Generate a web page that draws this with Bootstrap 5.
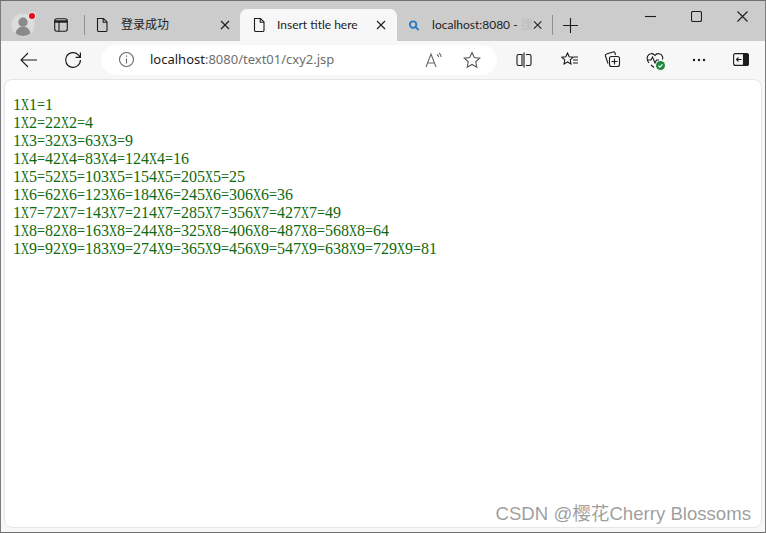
<!DOCTYPE html>
<html lang="zh-CN">
<head>
  <meta charset="UTF-8" />
  <meta name="viewport" content="width=device-width, initial-scale=1.0" />
  <title>Insert title here</title>
  <link href="https://cdn.jsdelivr.net/npm/bootstrap@5.3.0/dist/css/bootstrap.min.css" rel="stylesheet">
  <style>
    html, body { height: 100%; }
    body {
      margin: 0;
      overflow: hidden;
      background: #f7f7f7;
      font-family: "Noto Sans", "Noto Sans CJK SC", sans-serif;
      color: #222;
    }
    svg { display: block; fill: none; stroke: #1c1c1c; stroke-width: 1.1; }
    .win-frame {
      height: 533px;
      border-top: 1px solid #6e6e6e;
      border-left: 1px solid #7d7d7d;
      border-right: 1px solid #7d7d7d;
      border-bottom: 1px solid #6e6e6e;
      display: flex;
      flex-direction: column;
      position: relative;
    }
    .tab-strip { height: 40px; background: #cccccc; flex: none; padding-top: 8px; }
    .avatar-wrap { width: 24px; margin-left: 10px; position: relative; }
    .red-dot {
      position: absolute; top: 0; left: 18px; width: 6px; height: 6px;
      border-radius: 50%; background: #e00b1c; box-shadow: 0 0 0 1px #e6e6e6;
    }
    .strip-sep { width: 1px; height: 20px; background: #8f8f8f; flex: none; }
    .tab-item {
      height: 32px; font-size: 12px; white-space: nowrap; flex: none;
      font-family: "Lato", "Noto Sans CJK SC", sans-serif;
    }
    .tab-first { width: 155px; padding: 0 10px 0 9px; }
    .tab-active {
      width: 157px; background: #f7f7f7;
      border-radius: 7px 7px 0 0; padding: 0 11px;
    }
    .tab-third { width: 155px; padding: 0 10px 0 11px; }
    .tab-label { flex: 1; overflow: visible; }
    .tab-fade { color: #bdbdbd; }
    .win-btn { width: 46px; display: flex; justify-content: center; }
    .tool-strip { height: 37px; background: #f7f7f7; flex: none; }
    .addr-box {
      width: 396px; height: 30px; background: #fff; border-radius: 15px;
      font-size: 13px; margin-left: 19px;
    }
    .addr-host { color: #1c1c1c; }
    .addr-rest { color: #6f6f6f; }
    .page-pane {
      flex: 1; background: #fff; margin: 1px 3px 4px 3px;
      border-radius: 8px; border: 1px solid #e6e6e6; padding: 16px 8px 0;
    }
    .calc-text {
      font-family: "Liberation Serif", serif;
      font-size: 16px; line-height: 18px; color: #0f6a0f; white-space: nowrap;
    }
    /* X and = are wider than the digits in this font, squeeze them into the 8px cell */
    .cell-x, .cell-eq { display: inline-block; width: 8px; transform-origin: left center; }
    .cell-x { transform: scaleX(.69); }
    .cell-eq { transform: scaleX(.88); }
    .csdn-mark {
      position: absolute; right: 14px; bottom: 6px;
      font-family: "Liberation Sans", "Noto Sans CJK SC", sans-serif;
      font-size: 18.6px; line-height: 24px; color: rgba(120,120,120,.72);
    }
  </style>
</head>
<body>
  <div class="win-frame">
    <div class="tab-strip d-flex align-items-center">
      <div class="avatar-wrap">
        <svg width="24" height="24" viewBox="0 0 26 26" style="stroke:none">
          <circle cx="13" cy="13" r="12.5" fill="#dcdcdc"/>
          <circle cx="13" cy="10" r="5" fill="#8a8a8a"/>
          <path d="M5 22c1-5 4-7 8-7s7 2 8 7c-2 2-5 3-8 3s-6-1-8-3z" fill="#8a8a8a"/>
        </svg>
        <span class="red-dot"></span>
      </div>
      <svg style="margin-left:18px" width="16" height="16" viewBox="0 0 16 16" stroke-width="1.4">
        <rect x="1.700" y="1.700" width="12.600" height="12.600" rx="2.200"/>
        <path d="M1.700 4.500h12.600" stroke-width="2.400"/><path d="M6 5v9.300"/>
      </svg>
      <span class="strip-sep" style="margin-left:15px"></span>
      <div class="tab-item tab-first d-flex align-items-center">
        <svg width="16" height="16" viewBox="0 0 16 16">
          <path d="M3.500 1.500h6l3.500 3.500v8.200a1.300 1.300 0 0 1-1.300 1.300H4.800a1.300 1.300 0 0 1-1.300-1.300z"/><path d="M9.200 1.500v3.800H13"/>
        </svg>
        <span class="tab-label" style="margin-left:11px">登录成功</span>
        <svg width="10" height="10" viewBox="0 0 10 10"><path d="M1 1l8 8M9 1l-8 8"/></svg>
      </div>
      <div class="tab-item tab-active d-flex align-items-center">
        <svg width="16" height="16" viewBox="0 0 16 16">
          <path d="M3.500 1.500h6l3.500 3.500v8.200a1.300 1.300 0 0 1-1.300 1.300H4.800a1.300 1.300 0 0 1-1.300-1.300z"/><path d="M9.200 1.500v3.800H13"/>
        </svg>
        <span class="tab-label" style="margin-left:10px">Insert title here</span>
        <svg width="10" height="10" viewBox="0 0 10 10"><path d="M1 1l8 8M9 1l-8 8"/></svg>
      </div>
      <div class="tab-item tab-third d-flex align-items-center">
        <svg width="13" height="13" viewBox="0 0 13 13" style="stroke:#2a78c2;stroke-width:2">
          <circle cx="5.500" cy="5.500" r="3.500"/><path d="M8 8l3.500 3.500"/>
        </svg>
        <span class="tab-label" style="margin-left:12px">localhost:8080 - <span class="tab-fade">搜</span></span>
        <svg width="10" height="10" viewBox="0 0 10 10"><path d="M1 1l8 8M9 1l-8 8"/></svg>
      </div>
      <span class="strip-sep"></span>
      <svg style="margin-left:10px" width="15" height="15" viewBox="0 0 15 15"><path d="M7.500 0v15M0 7.500h15"/></svg>
      <div class="ms-auto d-flex align-self-start" style="margin-top:2px">
        <div class="win-btn"><svg width="11" height="11" viewBox="0 0 11 11"><path d="M0 5.500h11"/></svg></div>
        <div class="win-btn"><svg width="11" height="11" viewBox="0 0 11 11"><rect x=".5" y=".5" width="10" height="10" rx="1.500"/></svg></div>
        <div class="win-btn"><svg width="11" height="11" viewBox="0 0 11 11"><path d="M.5.5l10 10M10.500.5l-10 10"/></svg></div>
      </div>
    </div>

    <div class="tool-strip d-flex align-items-center">
      <svg style="margin-left:19px" width="17" height="16" viewBox="0 0 17 16"><path d="M1 8h16M8 1L1 8l7 7"/></svg>
      <svg style="margin-left:27px" width="18" height="18" viewBox="0 0 17 17"><path d="M15.500 8.500a7 7 0 1 1-2-4.900L15.500 6M15.500 1.500V6H11"/></svg>
      <div class="addr-box d-flex align-items-center">
        <svg style="margin-left:17px" width="17" height="17" viewBox="0 0 17 17"><circle cx="8.500" cy="8.500" r="7" stroke="#666"/><path d="M8.500 7.500v5M8.500 4.500v1.300" stroke="#666"/></svg>
        <span style="margin-left:15px"><span class="addr-host">localhost</span><span class="addr-rest">:8080/text01/cxy2.jsp</span></span>
        <svg class="ms-auto" width="18" height="16" viewBox="0 0 18 16"><path stroke="#666" d="M1 15L6 2l5 13M2.800 11h6.400M12 2.500c1 .6 1.500 1.400 1.500 2.500M14 1c1.400 1 2.200 2.400 2.200 4"/></svg>
        <svg style="margin-left:20px;margin-right:16px" width="18" height="18" viewBox="0 0 18 18"><path stroke="#555" d="M9 1.500l2.300 5 5.400.6-4 3.700 1.100 5.400L9 13.500l-4.800 2.700 1.100-5.400-4-3.700 5.400-.6z"/></svg>
      </div>
      <svg style="margin-left:19px" width="16" height="16" viewBox="0 0 16 16"><path d="M6 2.500H2.500a1.500 1.500 0 0 0-1.500 1.500v8a1.500 1.500 0 0 0 1.500 1.500H6zM8 .5v15M10 2.500h3.500A1.500 1.500 0 0 1 15 4v8a1.500 1.500 0 0 1-1.500 1.500H10"/></svg>
      <svg style="margin-left:29px" width="18" height="16" viewBox="0 0 18 16"><path d="M6.500 1l1.700 3.700 4 .5-3 2.700.8 4-3.500-2-3.500 2 .8-4-3-2.700 4-.5zM12 8h5M12 11h5M13 5h4"/></svg>
      <svg style="margin-left:25px" width="17" height="17" viewBox="0 0 17 17"><path d="M4 12.500L1.500 5a1.500 1.500 0 0 1 1-2L9 1a1.500 1.500 0 0 1 2 1l.5 2"/><rect x="5.500" y="5.500" width="10" height="10" rx="2"/><path d="M10.500 7.500v6M7.500 10.500h6"/></svg>
      <span style="margin-left:25px;position:relative;display:block">
        <svg width="18" height="16" viewBox="0 0 18 16"><path d="M3 11C1 8.500 1 6 1.500 4.500 2.500 1.500 7 .5 9 3.500c2-3 6.500-2 7.500 1 .3 1 .3 2-.2 3M1.500 8H5l1.500-3L9 11l1.500-3H13M5 13l3 2.500"/></svg>
        <svg style="position:absolute;right:-1px;bottom:-2px;stroke:#fff;stroke-width:1.200" width="9" height="9" viewBox="0 0 9 9"><circle cx="4.500" cy="4.500" r="4.500" fill="#1f8a3b" stroke="none"/><path d="M2.500 4.700l1.400 1.400 2.600-2.800"/></svg>
      </span>
      <svg style="margin-left:28px;fill:#1c1c1c;stroke:none" width="14" height="4" viewBox="0 0 14 4"><circle cx="2" cy="2" r="1.200"/><circle cx="7" cy="2" r="1.200"/><circle cx="12" cy="2" r="1.200"/></svg>
      <svg style="margin-left:27px" width="16" height="13" viewBox="0 0 16 13"><rect x=".6" y=".6" width="14.800" height="11.800" rx="2"/><path d="M10.500.6h3a2 2 0 0 1 2 2v7.800a2 2 0 0 1-2 2h-3z" fill="#1c1c1c"/><path d="M8.500 6.500H3.500M5.500 4.500l-2 2 2 2"/></svg>
    </div>

    <div class="page-pane">
      <div class="calc-text" id="calcOut"></div>
    </div>
    <div class="csdn-mark">CSDN @樱花Cherry Blossoms</div>
  </div>

  <script>
    // the table runs together on each row, same as the jsp output
    const rows = [];
    for (let i = 1; i <= 9; i++) {
      let line = '';
      for (let j = 1; j <= i; j++) {
        line += j + '<span class="cell-x">X</span>' + i + '<span class="cell-eq">=</span>' + (i * j);
      }
      rows.push(line);
    }
    document.getElementById('calcOut').innerHTML = rows.join('<br>');
  </script>
  <script src="https://cdn.jsdelivr.net/npm/bootstrap@5.3.0/dist/js/bootstrap.bundle.min.js"></script>
</body>
</html>
